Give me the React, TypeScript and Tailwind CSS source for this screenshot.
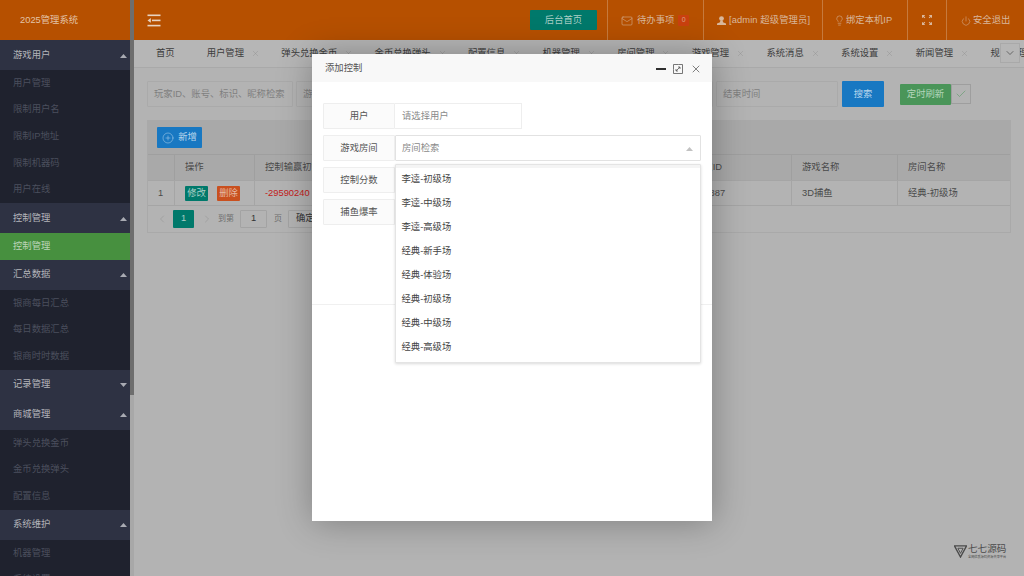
import { Mail, Power, Lightbulb, X, Check, ChevronDown, ChevronLeft, ChevronRight, CirclePlus } from 'lucide-react';

const menu = [
  { title: '游戏用户', open: true, items: ['用户管理', '限制用户名', '限制IP地址', '限制机器码', '用户在线'] },
  { title: '控制管理', open: true, items: ['控制管理'], active: '控制管理' },
  { title: '汇总数据', open: true, items: ['银商每日汇总', '每日数据汇总', '银商时时数据'] },
  { title: '记录管理', open: false, items: [] },
  { title: '商城管理', open: true, items: ['弹头兑换金币', '金币兑换弹头', '配置信息'] },
  { title: '系统维护', open: true, items: ['机器管理', '系统设置'] },
];

const tabs = ['用户管理', '弹头兑换金币', '金币兑换弹头', '配置信息', '机器管理', '房间管理', '游戏管理', '系统消息', '系统设置', '新闻管理', '规则管理'];

const rooms = ['李逵-初级场', '李逵-中级场', '李逵-高级场', '经典-新手场', '经典-体验场', '经典-初级场', '经典-中级场', '经典-高级场'];

const columns = [
  { label: '', width: 27 },
  { label: '操作', width: 80 },
  { label: '控制输赢初始', width: 143 },
  { label: '控制分数', width: 143 },
  { label: '捕鱼爆率', width: 143 },
  { label: '玩家ID', width: 108 },
  { label: '游戏名称', width: 106 },
  { label: '房间名称', width: 114 },
];

function Caret({ up = true, className = '' }: { up?: boolean; className?: string }) {
  return (
    <svg width="7" height="4" viewBox="0 0 7 4" className={className} fill="currentColor">
      {up ? <path d="M3.5 0L7 4H0z" /> : <path d="M0 0h7L3.5 4z" />}
    </svg>
  );
}

function Sidebar() {
  return (
    <aside className="w-[130px] h-full shrink-0 flex flex-col overflow-hidden bg-[#1f222e]">
      <div className="h-[40px] shrink-0 bg-[#b65000] pl-[20px] pt-[1px] flex items-center text-[9.33px] text-[#e3c3a8]">
        2025管理系统
      </div>
      {menu.map((group) => (
        <div key={group.title} className="shrink-0">
          <div className="h-[30px] bg-[#2e3243] flex items-center justify-between pl-[13px] pr-[3px] pt-[1px] text-[9.33px] text-[#b4b5ba]">
            <span>{group.title}</span>
            <Caret up={group.open} className="text-[#a9abb3]" />
          </div>
          {group.items.map((item) => (
            <div
              key={item}
              className={
                item === group.active
                  ? 'h-[26.67px] flex items-center pl-[13px] pt-[1px] text-[9.33px] bg-[#47903f] text-[#bcd4b8]'
                  : 'h-[26.67px] flex items-center pl-[13px] pt-[1px] text-[9.33px] text-[#4b4f5d]'
              }
            >
              {item}
            </div>
          ))}
        </div>
      ))}
    </aside>
  );
}

function TopBar() {
  return (
    <header className="h-[40px] shrink-0 bg-[#b65000] flex items-center text-[9.33px] text-[#d9b79c]">
      <svg width="14" height="13" viewBox="0 0 14 13" className="ml-[13px] text-[#e8d3c1]" fill="currentColor">
        <rect x="0.5" y="0.5" width="13" height="1.6" />
        <rect x="5" y="5.6" width="8.5" height="1.6" />
        <rect x="0.5" y="10.8" width="13" height="1.6" />
        <path d="M0.5 6.4L3.8 4v4.8z" />
      </svg>
      <div className="ml-auto flex items-center h-full">
        <button className="w-[67px] h-[20px] mr-[10px] pt-[1px] bg-[#00796b] rounded-[1px] text-[#a9cfc6]">后台首页</button>
        <div className="w-[96px] h-full border-l border-[#c67a3d] flex items-center pl-[13px] pt-[1px]">
          <Mail size={12} strokeWidth={1.1} className="mr-[4px]" />
          <span>待办事项</span>
          <span className="ml-[4px] w-[11px] h-[11px] bg-[#c9400f] rounded-[1px] flex items-center justify-center text-[7px] text-[#d9a58a]">0</span>
        </div>
        <div className="w-[119px] h-full border-l border-[#c67a3d] flex items-center pl-[13px] pt-[1px]">
          <svg width="9" height="9" viewBox="0 0 9 9" className="mr-[3px]" fill="currentColor">
            <circle cx="4.5" cy="2.6" r="2.4" />
            <path d="M3.3 4.6h2.4l.3 1.6L9 7.4V9H0V7.4l3-1.2z" />
          </svg>
          <span className="tracking-[0.1px]">[admin 超级管理员]</span>
        </div>
        <div className="w-[85px] h-full border-l border-[#c67a3d] flex items-center pl-[11px] pt-[1px]">
          <Lightbulb size={11} strokeWidth={1.2} className="mr-[1px]" />
          <span>绑定本机IP</span>
        </div>
        <div className="w-[39px] h-full border-l border-[#c67a3d] flex items-center justify-center">
          <svg width="10" height="10" viewBox="0 0 9 9" fill="none" stroke="currentColor" strokeWidth="1">
            <path d="M0.5 2.5v-2h2M6.5 0.5h2v2M8.5 6.5v2h-2M2.5 8.5h-2v-2M1 1l1.6 1.6M8 1L6.4 2.6M8 8L6.4 6.4M1 8l1.6-1.6" />
          </svg>
        </div>
        <div className="w-[78px] h-full border-l border-[#c67a3d] flex items-center pl-[14px] pt-[1px]">
          <Power size={10} strokeWidth={1.2} className="mr-[2px]" />
          <span>安全退出</span>
        </div>
      </div>
    </header>
  );
}

function TabBar() {
  return (
    <div className="relative h-[28px] shrink-0 bg-[#b6b6b6] border-b border-[#a9a9a9] flex items-center pl-[22px] overflow-hidden text-[9.33px] text-[#3d3d3d]">
      <span className="mr-[32px] shrink-0">首页</span>
      {tabs.map((tab) => (
        <span key={tab} className="flex items-center shrink-0 mr-[21.33px]">
          {tab}
          <X size={9} strokeWidth={1} className="ml-[7px] text-[#8c8c8c]" />
        </span>
      ))}
      <div className="absolute right-[4px] top-[3px] w-[20px] h-[20px] bg-[#b6b6b6] border border-[#a9a9a9] flex items-center justify-center">
        <ChevronDown size={12} strokeWidth={1.2} className="text-[#333333]" />
      </div>
    </div>
  );
}

function SearchRow() {
  const fields = [
    { text: '玩家ID、账号、标识、昵称检索', width: 'w-[146px]' },
    { text: '游戏名称', width: 'w-[146px]' },
    { text: '房间名称', width: 'w-[146px]' },
    { text: '开始时间', width: 'w-[119px]' },
    { text: '结束时间', width: 'w-[122px]' },
  ];
  return (
    <div className="flex items-center gap-[3px] h-[26px] text-[9.33px] text-[#7f7f7f]">
      {fields.map((f) => (
        <div key={f.text} className={`${f.width} h-[26px] border border-[#aaaaaa] rounded-[1px] flex items-center pl-[6px] pt-[1px] whitespace-nowrap`}>
          {f.text}
        </div>
      ))}
      <button className="w-[42px] h-[26px] ml-[1px] pt-[1px] bg-[#1878c2] rounded-[1px] text-[#b8d6ec]">搜索</button>
      <div className="flex items-center ml-[13px] h-[21px]">
        <div className="w-[51px] h-[21px] pt-[1px] bg-[#4a9559] rounded-[1px] flex items-center justify-center text-[#b4d6bc]">定时刷新</div>
        <div className="w-[20px] h-[20px] border border-[#9e9e9e] flex items-center justify-center">
          <Check size={12} strokeWidth={1} className="text-[#4a9559]" />
        </div>
      </div>
    </div>
  );
}

function DataTable() {
  const row = ['1', '', '-29590240', '', '', '100887', '3D捕鱼', '经典-初级场'];
  return (
    <div className="mt-[13px] w-[864px] border border-[#a9a9a9] text-[9.33px] text-[#4a4a4a]">
      <div className="h-[33px] bg-[#a9a9a9] flex items-center pl-[9px]">
        <button className="w-[45px] h-[21px] pt-[1px] bg-[#1878c2] rounded-[1px] flex items-center justify-center text-[#b8d6ec]">
          <CirclePlus size={12} strokeWidth={1} className="mr-[4px]" />
          新增
        </button>
      </div>
      <div className="flex h-[26px] bg-[#a9a9a9] border-t border-[#9f9f9f]">
        {columns.map((c) => (
          <div key={c.label + c.width} style={{ width: c.width }} className="shrink-0 border-r border-[#9f9f9f] last:border-r-0 flex items-center pl-[10px] pt-[1px] whitespace-nowrap">
            {c.label}
          </div>
        ))}
      </div>
      <div className="flex h-[26px] bg-[#b3b3b3] border-y border-[#a5a5a5]">
        {columns.map((c, i) => (
          <div key={c.label + c.width} style={{ width: c.width }} className="shrink-0 border-r border-[#a5a5a5] last:border-r-0 flex items-center pl-[10px] pt-[1px] whitespace-nowrap">
            {i === 1 ? (
              <span className="flex gap-[9px]">
                <span className="w-[23px] h-[15px] bg-[#00796b] rounded-[1px] flex items-center justify-center text-[#a9cfc6]">修改</span>
                <span className="w-[23px] h-[15px] bg-[#c9501f] rounded-[1px] flex items-center justify-center text-[#e5b9a3]">删除</span>
              </span>
            ) : i === 2 ? (
              <span className="text-[#c41a1a]">{row[i]}</span>
            ) : (
              row[i]
            )}
          </div>
        ))}
      </div>
      <div className="h-[26px] flex items-center pl-[8px] text-[#6f6f6f]">
        <ChevronLeft size={12} strokeWidth={1} className="text-[#8f8f8f]" />
        <span className="ml-[5px] w-[21px] h-[18px] bg-[#00796b] rounded-[1px] flex items-center justify-center text-[#a9cfc6]">1</span>
        <ChevronRight size={12} strokeWidth={1} className="ml-[7px] text-[#8f8f8f]" />
        <span className="ml-[5px] text-[8px]">到第</span>
        <span className="ml-[6px] w-[27px] h-[18px] border border-[#a3a3a3] rounded-[1px] flex items-center justify-center text-[#333333]">1</span>
        <span className="ml-[7px] text-[8px]">页</span>
        <span className="ml-[6px] w-[40px] h-[18px] border border-[#a3a3a3] rounded-[1px] flex items-center pl-[7px] text-[#333333]">确定</span>
      </div>
    </div>
  );
}

function FormRow({ label, inputClass, children }: { label: string; inputClass: string; children?: React.ReactNode }) {
  return (
    <div className="flex h-[25.5px] mb-[6.5px]">
      <div className="w-[72px] shrink-0 pt-[2px] bg-[#fbfbfb] border border-[#eeeeee] rounded-l-[1px] flex items-center justify-center text-[#555555]">
        {label}
      </div>
      <div className={inputClass}>{children}</div>
    </div>
  );
}

function Modal() {
  return (
    <div className="absolute left-[312px] top-[54px] w-[400px] h-[467px] bg-white shadow-[1px_1px_33px_rgba(0,0,0,0.3)] text-[9.33px]">
      <div className="h-[28px] bg-[#f8f8f8] flex items-center pl-[13px] text-[#555555]">
        <span className="pt-[2px]">添加控制</span>
        <div className="ml-auto mr-[10px] mt-[2px] flex items-center gap-[7px] text-[#2f2f2f]">
          <span className="w-[10px] h-[1.3px] bg-[#2f2f2f]" />
          <svg width="10" height="10" viewBox="0 0 10 10" fill="none" stroke="#555555" strokeWidth="0.8">
            <path d="M5.5 0.5h4v9h-9v-4M0.5 5.5v-5h5" />
            <path d="M3 7l4-4M5 3h2v2M3 5v2h2" />
          </svg>
          <X size={12} strokeWidth={1.2} />
        </div>
      </div>
      <div className="h-[223px] border-b border-[#f0f0f0] pt-[21.33px] pl-[11px] pr-[11px]">
        <FormRow label="用户" inputClass="w-[127px] border border-[#eeeeee] border-l-0 flex items-center pl-[7px] pt-[1px] text-[#8a8a8a]">
          请选择用户
        </FormRow>
        <FormRow label="游戏房间" inputClass="w-[306px] border border-[#e2e2e2] flex items-center justify-between pl-[6px] pr-[7px] pt-[2px] rounded-[1px] text-[#8a8a8a]">
          房间检索
          <Caret className="text-[#c2c2c2]" />
        </FormRow>
        <FormRow label="控制分数" inputClass="w-[306px] border border-[#eeeeee]" />
        <FormRow label="捕鱼爆率" inputClass="w-[306px] border border-[#eeeeee]" />
      </div>
      <div className="absolute left-[83px] top-[110px] w-[306px] h-[199px] bg-white border border-[#e4e4e4] shadow-[0_1px_3px_rgba(0,0,0,0.15)] rounded-[1px]">
        <div className="h-[2.5px] bg-[#f4f4f4]" />
        {rooms.map((room) => (
          <div key={room} className="h-[24px] flex items-center pl-[5.5px] text-[#444444]">{room}</div>
        ))}
      </div>
    </div>
  );
}

function Watermark() {
  return (
    <div className="absolute left-[954px] top-[544px] flex items-start text-[#4a4a4a]">
      <svg width="13" height="13" viewBox="0 0 14 14" fill="none" stroke="currentColor" className="mt-[1px]">
        <path d="M0.5 1h13L7 13z" strokeWidth="1.4" />
        <path d="M4.2 3.5h5.6L7 9z" strokeWidth="1" />
      </svg>
      <div className="ml-[1px] leading-none">
        <div className="text-[9.6px] h-[10px]">七七源码</div>
        <div className="text-[3.2px] mt-[2px] whitespace-nowrap">全网优质源码资源共享平台</div>
      </div>
    </div>
  );
}

export default function App() {
  return (
    <div
      className="relative w-[1024px] h-[576px] overflow-hidden flex bg-[#b3b3b3]"
      style={{ fontFamily: '"Liberation Sans", "Noto Sans CJK SC", sans-serif' }}
    >
      <Sidebar />
      <div className="w-[4px] h-full shrink-0 bg-[#a8a8a8]">
        <div className="h-[395px] bg-[#6e6e6e]" />
      </div>
      <main className="flex-1 min-w-0 flex flex-col">
        <TopBar />
        <TabBar />
        <div className="pl-[13px] pt-[13px]">
          <SearchRow />
          <DataTable />
        </div>
      </main>
      <Modal />
      <Watermark />
    </div>
  );
}
